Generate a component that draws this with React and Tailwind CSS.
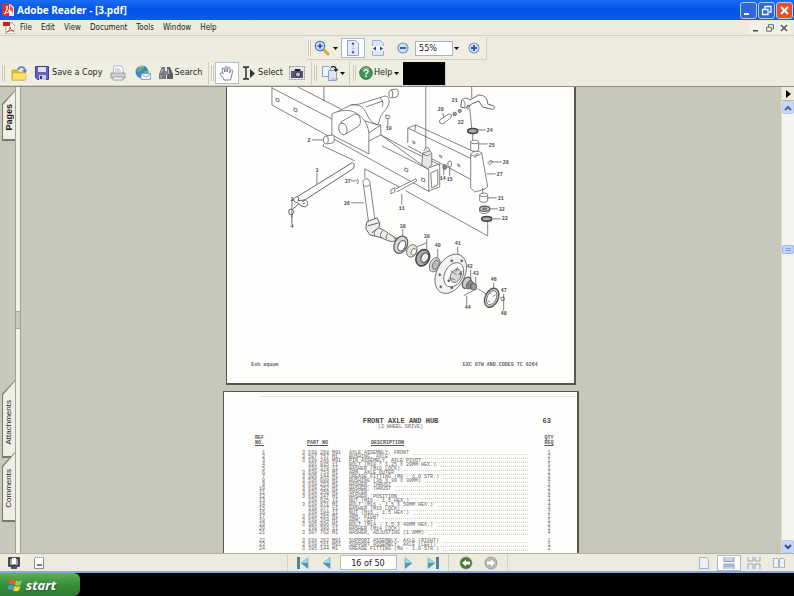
const UI_FONT = "font-['DejaVu_Sans_Condensed','DejaVu_Sans',sans-serif]";

const menus = ["File", "Edit", "View", "Document", "Tools", "Window", "Help"];

const parts = [
  ["1", "3 638 268 M91", "AXLE ASSEMBLY, FRONT", "1"],
  ["2", "3 587 757 M1", "BUSHING, AXLE", "2"],
  ["3", "3 638 246 M91", "PIN ASSEMBLY, AXLE PIVOT", "1"],
  ["4", "  391 835 11", "BOLT (M10 * 1.25 X 20MM HEX.)", "1"],
  ["5", "  338 378 11", "WASHER (M10 LOCK)", "1"],
  ["6", "3 638 753 M1", "ARM, AXLE OUTER", "2"],
  ["7", "3 385 144 M1", "GREASE FITTING (M8 - 1.0 STR.)", "2"],
  ["8", "3 536 080 M1", "BUSHING (36 X 30 X 30MM)", "4"],
  ["9", "3 638 253 M1", "WASHER, THRUST", "2"],
  ["10", "3 638 252 M1", "WASHER, THRUST", "2"],
  ["11", "3 638 250 M1", "SPACER", "2"],
  ["12", "3 638 247 M1", "WASHER, POSITION", "4"],
  ["13", "  338 625 11", "NUT (M16 - 1.5 HEX.)", "4"],
  ["14", "3 638 671 M1", "BOLT (M16 - 1.5 X 50MM HEX.)", "4"],
  ["15", "  338 377 11", "WASHER (M16 LOCK)", "4"],
  ["16", "  339 184 11", "NUT (M16 - 1.5 HEX.)", "2"],
  ["17", "3 638 265 M1", "ARM, RIGHT", "1"],
  ["18", "3 638 264 M1", "ARM, LEFT", "1"],
  ["19", "3 385 806 M1", "BOLT (M14 - 1.5 X 40MM HEX.)", "2"],
  ["20", "  338 380 11", "WASHER (M14 LOCK)", "2"],
  ["21", "3 387 762 M1", "WASHER, ADJUSTING (1.0MM)", "4"],
  ["", "", "", ""],
  ["22", "3 638 262 M91", "SUPPORT ASSEMBLY, AXLE (RIGHT)", "1"],
  ["23", "3 638 261 M91", "SUPPORT ASSEMBLY, AXLE (LEFT)", "1"],
  ["24", "3 385 144 M1", "GREASE FITTING (M8 - 1.0 STR.)", "2"],
];

// [number, x, y] of every callout in the exploded view
const callouts = [
  ["2", 309, 141], ["10", 389, 129], ["3", 317, 171], ["3", 292, 200], ["4", 292, 227],
  ["37", 348, 182], ["36", 347, 204], ["11", 402, 209], ["20", 441, 110], ["21", 455, 101],
  ["22", 461, 123], ["24", 490, 131], ["25", 492, 146], ["28", 506, 163], ["27", 500, 175],
  ["31", 501, 199], ["32", 502, 210], ["33", 505, 219], ["14", 443, 179], ["15", 450, 180],
  ["38", 403, 227], ["39", 427, 237], ["40", 438, 246], ["41", 458, 244], ["42", 470, 267],
  ["43", 476, 274], ["44", 468, 308], ["46", 494, 280], ["47", 504, 291], ["48", 504, 314],
];

function Caret({ className = "" }) {
  return (
    <svg viewBox="0 0 5 3" className={`h-[3px] w-[5px] shrink-0 ${className}`} aria-hidden="true">
      <path d="M0 0h5L2.500 3z" fill="#111" />
    </svg>
  );
}

function Grip({ className = "" }) {
  return <span className={`h-4 w-[3px] shrink-0 border-x border-x-[#cfc6b4] bg-[#faf8ee] ${className}`} />;
}

function AppLogo() {
  return (
    <svg viewBox="0 0 12 14" className="h-[14px] w-[12px]" aria-hidden="true">
      <path d="M0 1h8l4 3v9H0z" fill="#f7ded8" />
      <path d="M0 1h7v12H0z" fill="#d43325" />
      <path d="M2 11c2-2 3-5 3-8 0 4 2 6 5 6-3 0-5 0-8 2z" fill="none" stroke="#fff" />
      <path d="M8 2l3 3v5l-3-3z" fill="#e0604f" />
    </svg>
  );
}

function PdfIcon() {
  return (
    <svg viewBox="0 0 12 12" className="h-3 w-3" aria-hidden="true">
      <path d="M3 1h6l3 3v8H3z" fill="#fff" stroke="#777" strokeWidth=".7" />
      <path d="M0 0h7v4H0z" fill="#c8201a" />
      <path d="M4 10c2-1 3-3 3-5 0 2 2 4 4 4-3-1-5 0-7 1z" fill="none" stroke="#c8201a" strokeWidth=".8" />
    </svg>
  );
}

function ZoomIcon() {
  return (
    <svg viewBox="0 0 16 16" className="h-4 w-4" aria-hidden="true">
      <path d="M9 9l5 5" stroke="#e0a82e" strokeWidth="3" strokeLinecap="round" />
      <circle cx="6" cy="6" r="4.600" fill="#d5e6fa" stroke="#4a76bd" strokeWidth="1.300" />
      <path d="M6 3.500v5M3.500 6h5" stroke="#1d4fa8" strokeWidth="1.600" />
    </svg>
  );
}

function RoundSign({ plus }) {
  return (
    <svg viewBox="0 0 12 12" className="h-3 w-3" aria-hidden="true">
      <circle cx="6" cy="6" r="5" fill="#cfdff6" stroke="#7f98c6" strokeWidth="1.200" />
      <path d={plus ? "M6 3v6M3 6h6" : "M3 6h6"} stroke="#2b56a5" strokeWidth="1.800" />
    </svg>
  );
}

function FitPageIcon() {
  return (
    <svg viewBox="0 0 14 16" className="h-4 w-[14px]" aria-hidden="true">
      <path d="M1.500.5h8l3 3v12h-11z" fill="#e3edfb" stroke="#91a9cf" />
      <path d="M7 4v8" stroke="#7790ba" strokeDasharray="1 1" />
      <path d="M5.500 4.500L7 2l1.500 2.500zM5.500 11.500L7 14l1.500-2.500z" fill="#2c4164" />
    </svg>
  );
}

function FitWidthIcon() {
  return (
    <svg viewBox="0 0 14 16" className="h-4 w-[14px]" aria-hidden="true">
      <path d="M1.500.5h8l3 3v12h-11z" fill="#dbe7f9" stroke="#9bb1d6" />
      <path d="M1 6h12v5H1z" fill="#f4f8ff" />
      <path d="M5 6.500L2 8.500l3 2zM9 6.500l3 2-3 2z" fill="#2c4164" />
    </svg>
  );
}

function FolderIcon() {
  return (
    <svg viewBox="0 0 16 16" className="h-4 w-4" aria-hidden="true">
      <path d="M1 5h5l1 2h7v8H1z" fill="#e2b932" stroke="#c79a20" strokeWidth=".7" />
      <path d="M2 8h13v7H1z" fill="#fbe36f" stroke="#d2aa2e" strokeWidth=".6" />
      <path d="M7 5c1-4 6-4 7 0" fill="none" stroke="#6f8fc4" strokeWidth="2" />
      <path d="M11 5h5l-2 3z" fill="#4d7ac2" />
    </svg>
  );
}

function SaveIcon() {
  return (
    <svg viewBox="0 0 14 14" className="h-[14px] w-[14px]" aria-hidden="true">
      <path d="M.5.5h13v13h-11l-2-2z" fill="#6662bd" stroke="#423e91" />
      <path d="M3 1h8v5H3z" fill="#dfe2f8" />
      <path d="M4 9h7v5H4z" fill="#c8c9e4" />
      <path d="M5 10h2v3H5z" fill="#38347e" />
    </svg>
  );
}

function PrinterIcon() {
  return (
    <svg viewBox="0 0 16 16" className="h-4 w-4" aria-hidden="true">
      <path d="M4 1h7l2 2v6H3z" fill="#fff" stroke="#a3a7b0" strokeWidth=".8" />
      <path d="M5 4h5M5 6h6" stroke="#9bb4df" />
      <path d="M1 8h14v5H1z" fill="#cfd1d6" stroke="#8b8e96" strokeWidth=".8" />
      <path d="M3 12h10v3H3z" fill="#f8f8f8" stroke="#8b8e96" strokeWidth=".8" />
    </svg>
  );
}

function MailIcon() {
  return (
    <svg viewBox="0 0 16 16" className="h-4 w-4" aria-hidden="true">
      <circle cx="7" cy="7" r="6.500" fill="#3d84cf" />
      <path d="M3 3c3-2 5-2 6 0L7 6 4 7 1 6zM9 6l4-1v4H9z" fill="#63ad73" />
      <path d="M4 2c2-1 4-1 5-1" stroke="#c3e3fb" />
      <path d="M6 8.500h9.500v6H6z" fill="#f1f5fd" stroke="#7993c0" strokeWidth=".8" />
      <path d="M6 9l5 3 4.500-3" fill="none" stroke="#7993c0" strokeWidth=".8" />
    </svg>
  );
}

function BinocularsIcon() {
  return (
    <svg viewBox="0 0 14 14" className="h-[14px] w-[14px]" aria-hidden="true">
      <path d="M3 1h3v4l1 2v6H0V8z" fill="#74767d" />
      <path d="M8 1h3l3 7v5H8z" fill="#5c5e65" />
      <path d="M5 5h4v4H5z" fill="#82858d" />
      <path d="M2 7l2-4M9 3l1 5M2 9v3" stroke="#c1c4cc" />
    </svg>
  );
}

function HandIcon() {
  return (
    <svg viewBox="0 0 16 16" className="h-4 w-4" aria-hidden="true">
      <path
        d="M5 15c0-2-4-5-4-6.500C1.500 7 3 8 4 9L3 4c0-1.500 1.500-1.500 2 0l1 3V2.500c0-1.500 2-1.500 2 0V7l1-4c.5-1.500 2-1 2 .5L10.500 8 12 5.500c1-1.200 2-.5 1.700.8L12.500 11c0 2-1 2.500-1 4z"
        fill="#fff"
        stroke="#6d7088"
        strokeWidth=".9"
      />
    </svg>
  );
}

function SelectIcon() {
  return (
    <svg viewBox="0 0 14 16" className="h-4 w-[14px]" aria-hidden="true">
      <path d="M1 2h2l1 1 1-1h2M4 3v11M1 14h2l1-1 1 1h2" fill="none" stroke="#222" strokeWidth="1.400" />
      <path d="M8 4v9l5-4.500z" fill="#333" />
    </svg>
  );
}

function CameraIcon() {
  return (
    <svg viewBox="0 0 16 16" className="h-4 w-4" aria-hidden="true">
      <path d="M.5 1.500h15v13H.5z" fill="#e4e5ed" stroke="#9496a4" strokeDasharray="2 1" />
      <path d="M2 6h3l1-2h5l1 2h2v7H2z" fill="#55586a" />
      <path d="M6 4h5v2H6z" fill="#20222c" />
      <circle cx="9" cy="9.500" r="2.700" fill="#a9b8dc" stroke="#272a36" />
    </svg>
  );
}

function OrganizeIcon() {
  return (
    <svg viewBox="0 0 18 16" className="h-4 w-[18px]" aria-hidden="true">
      <path d="M1.500 1.500h6l2 2v8h-8z" fill="#eef4fd" stroke="#8ba3cb" />
      <path d="M7.500 5.500h6l2 2v8h-8z" fill="#dbe8f9" stroke="#8ba3cb" />
      <path d="M10 14h7" stroke="#d99b7a" />
      <path d="M10 2c3-1 5 0 5 2" fill="none" stroke="#222" strokeWidth="1.400" />
      <path d="M12.500 4h5L15 7z" fill="#222" />
    </svg>
  );
}

function HelpIcon() {
  return (
    <svg viewBox="0 0 14 14" className="h-[14px] w-[14px]" aria-hidden="true">
      <circle cx="7" cy="7" r="6.300" fill="#459555" stroke="#2d6f3c" />
      <path d="M3 4c1-2 5-3 7-1" stroke="#a3d3a8" fill="none" />
      <path d="M5 5.500c0-2.500 4-2.500 4 0 0 1.500-2 1.200-2 3M7 9.500v1.500" fill="none" stroke="#fff" strokeWidth="1.500" />
    </svg>
  );
}

function TitleBar() {
  const box = "flex h-[17px] w-[17px] items-center justify-center rounded-[3px] border border-[#b9cdf5]";
  return (
    <header className="flex h-5 shrink-0 items-center bg-linear-to-b from-[#1c6cf5] via-[#0054e6] to-[#0a5cf2] pr-px pl-[2px]">
      <AppLogo />
      <h1 className="ml-[3px] flex-1 font-['Open_Sans',sans-serif] text-[10px] leading-4 font-bold text-white">
        Adobe Reader - [3.pdf]
      </h1>
      <div className="flex gap-px">
        <button aria-label="Minimize" className={`${box} bg-[#2f65dd]`}>
          <svg viewBox="0 0 11 11" className="h-[11px] w-[11px]"><path d="M1 8h5v2H1z" fill="#fff" /></svg>
        </button>
        <button aria-label="Restore" className={`${box} bg-[#2f65dd]`}>
          <svg viewBox="0 0 11 11" className="h-[11px] w-[11px]">
            <path d="M4 4V1.500h6V7H8M1.500 4.500h5.500v5H1.500z" fill="none" stroke="#fff" strokeWidth="1.300" />
          </svg>
        </button>
        <button aria-label="Close" className={`${box} bg-[#e2532c]`}>
          <svg viewBox="0 0 11 11" className="h-[11px] w-[11px]"><path d="M2 2l7 7M9 2L2 9" stroke="#fff" strokeWidth="2" /></svg>
        </button>
      </div>
    </header>
  );
}

function MenuBar() {
  return (
    <nav className="flex h-4 shrink-0 items-center border-b border-[#d3d1c2] bg-[#ecebdd] pr-1 pl-[3px]">
      <PdfIcon />
      <div className="ml-[5px] flex flex-1 gap-[9px]">
        {menus.map((m) => (
          <button key={m} className="text-[8px] leading-3">{m}</button>
        ))}
      </div>
      <div className="flex items-center gap-[2px]">
        <button aria-label="Minimize document" className="flex h-3 w-3 items-center justify-center bg-[#f4f3ea]">
          <svg viewBox="0 0 8 8" className="h-2 w-2"><path d="M1 6h5v1.500H1z" fill="#444" /></svg>
        </button>
        <button aria-label="Restore document" className="flex h-3 w-3 items-center justify-center bg-[#f4f3ea]">
          <svg viewBox="0 0 8 8" className="h-2 w-2"><path d="M2.500 3V.7h5V5H6M.7 3.200h4.600v4H.7z" fill="none" stroke="#666" /></svg>
        </button>
        <button aria-label="Close document" className="flex h-3 w-3 items-center justify-center bg-[#f4f3ea]">
          <svg viewBox="0 0 8 8" className="h-2 w-2"><path d="M1 1l6 6M7 1L1 7" stroke="#555" strokeWidth="1.500" /></svg>
        </button>
      </div>
    </nav>
  );
}

function Toolbars() {
  const bar = "flex items-center border-r border-b border-[#d0cebf] bg-[#efeee2]";
  return (
    <div className="shrink-0 border-b border-[#8d8e80] bg-[#ecebdd]">
      <div className="flex h-[25px] justify-center pt-px">
        <div className={`${bar} h-[23px] w-[180px] pl-px`}>
          <Grip />
          <button aria-label="Zoom in tool" className="ml-[3px] flex items-center"><ZoomIcon /><Caret className="ml-[3px]" /></button>
          <button aria-label="Fit page" className="ml-[3px] flex h-5 w-6 items-center justify-center border border-[#a4b5d6] bg-white"><FitPageIcon /></button>
          <button aria-label="Fit width" className="ml-[6px]"><FitWidthIcon /></button>
          <button aria-label="Zoom out" className="ml-[12px]"><RoundSign /></button>
          <input aria-label="Zoom level" defaultValue="55%" className="ml-[6px] h-[15px] w-[38px] border border-[#a5b3c8] bg-white pl-[3px] text-[9px]" />
          <button aria-label="Zoom presets" className="ml-px"><Caret /></button>
          <button aria-label="Zoom in" className="ml-[9px]"><RoundSign plus /></button>
        </div>
      </div>
      <div className="flex h-[25px] items-center text-[9px]">
        <div className={`${bar} h-6 w-[209px]`}>
          <Grip className="ml-[2px]" />
          <button aria-label="Open" className="ml-[6px]"><FolderIcon /></button>
          <button className="ml-[8px] flex items-center gap-[3px] whitespace-nowrap"><SaveIcon />Save a Copy</button>
          <button aria-label="Print" className="ml-[7px]"><PrinterIcon /></button>
          <button aria-label="Email" className="ml-[9px]"><MailIcon /></button>
          <button className="ml-[8px] flex items-center gap-[2px]"><BinocularsIcon />Search</button>
        </div>
        <div className={`${bar} h-6 w-[103px]`}>
          <Grip className="ml-[2px]" />
          <button aria-label="Hand tool" className="ml-px flex h-[22px] w-6 items-center justify-center border border-[#b4bed2] bg-white"><HandIcon /></button>
          <button className="ml-[3px] flex items-center gap-[2px]"><SelectIcon />Select</button>
          <button aria-label="Snapshot" className="ml-[6px]"><CameraIcon /></button>
        </div>
        <div className={`${bar} h-6 w-[38px]`}>
          <Grip className="ml-[2px]" />
          <button aria-label="Organize" className="ml-[4px] flex items-center"><OrganizeIcon /><Caret className="ml-px" /></button>
        </div>
        <div className={`${bar} h-6`}>
          <Grip className="ml-[3px]" />
          <button className="ml-[3px] flex items-center gap-px"><HelpIcon />Help<Caret className="ml-px" /></button>
          <div className="ml-[4px] h-[23px] w-[42px] bg-black" />
        </div>
      </div>
    </div>
  );
}

function SideTab({ label, className, textClass }) {
  return (
    <button className={`ml-[2px] w-[13px] shrink-0 bg-[#77796c] pt-px pb-[2px] pl-px [clip-path:polygon(100%_0,0_14px,0_100%,100%_100%)] ${className}`}>
      <span className={`flex h-full w-full items-end justify-center bg-[#eeeee4] [clip-path:polygon(100%_0,0_14px,0_100%,100%_100%)] ${textClass}`}>
        <span className="rotate-180 leading-3 [writing-mode:vertical-rl]">{label}</span>
      </span>
    </button>
  );
}

function Sidebar() {
  return (
    <aside className="flex shrink-0 bg-[#c7c8ba] font-['Liberation_Sans',Arial,sans-serif]">
      <div className="flex w-[15px] flex-col pt-[3px] pb-[31px]">
        <SideTab label="Pages" className="h-[51px]" textClass="pb-[8px] text-[9px] font-bold" />
        <div className="flex-1" />
        <SideTab label="Attachments" className="h-[78px]" textClass="pb-[12px] text-[8px]" />
        <SideTab label="Comments" className="-mt-[6px] h-[70px]" textClass="pb-[12px] text-[8px]" />
      </div>
      <div className="flex w-[6px] items-center border-x border-x-[#a3a496] bg-[#f1f1e6]">
        <div className="h-[18px] w-full border-y border-[#a3a496] bg-[#c9c9bb]" />
      </div>
    </aside>
  );
}

function AxleDrawing() {
  return (
    <svg viewBox="0 0 347 270" className="block aspect-[347/270] w-full" role="img" aria-label="Front axle exploded view">
      <g transform="translate(-227 -87)" fill="none" stroke="#636363" strokeWidth=".8" strokeLinejoin="round">
        {/* main beam */}
        <path d="M272 87v18l158 87M272 88l60 31M298 87l43 22M324 87v14M381 135l48 35v21l11-4v-23l-11 4M381 135l24 13 35 17M382 146l46 23M431 173l7-3v15l-6 3z" />
        <path d="M276 98l3 1v3l-3-1zM294 108l3 1v3l-3-1zM405 168l3 1v3l-3-1zM422 178l3 1v3l-3-1z" />
        {/* pivot bracket */}
        <path d="M337 112l14-7 9-1 22-7c6-3 8 2 7 7-1 4-5 7-8 12l-3 9z" fill="#fff" />
        <path d="M366 107l17-6M380 98c3 2 4 6 2 9" />
        <path d="M351 105c10-1 13 3 16 9 3 7 7 11 14 11v10l-12 6M369 133l12-8" />
        <path d="M332 135v-21c8-4 18-5 24-1 7 4 12 10 13 20v21z" fill="#fff" />
        <path d="M341 122l14-8c6 0 7 9 4 12l-13 8z" fill="#fff" />
        <ellipse cx="343" cy="129" rx="4" ry="6" transform="rotate(-15 343 129)" fill="#fff" />
        <path d="M327 136l6-1c2 1 2 7 0 8l-6 1" fill="#fff" />
        <ellipse cx="326" cy="140" rx="2.500" ry="4" fill="#fff" />
        <ellipse cx="391" cy="94" rx="2" ry="4" /><path d="M391 90l6-1c2 1 2 7 0 8l-5 1" />
        <path d="M386 115l4 1-1 3-3-1zM388 119v8M312 140h12M317 173v11M324 144l-1 2 32 15M292 199v19" />
        {/* pivot pin */}
        <path d="M297 197l55-34c3-1 3 4 1 6l-51 33M295 198c2-3 5 0 3 3l7-1c4 1 3 7 0 7-4 0-6-4-10-5-2-1-2-3 0-4M303 204l2-1M289 210l3-1 2 3-2 3-3-1zM293 209l6-5M292 215v9" strokeWidth="1" />
        {/* spindle */}
        <path d="M363 181l2-2h3l2 3 5 37M363 181l6 43M363 185c2 2 5 2 7 0M351 181h6M357 179c2 0 2 5 0 5M351 203h13M365 178v-9l38 20" />
        <path d="M367 222l10-4 3 5-1 5 6 3 12 8c-3 5-9 2-15-1l-12-3-4-6zM368 226l11-3M372 233l7-5M383 231c-3 3-3 5-1 7M388 234c-2 2-2 4-1 5M377 229c-3 3-3 5-2 7" fill="#ededed" strokeWidth="1" />
        {/* right hand sleeve and upright */}
        <path d="M408 143v-15l8-3 63 29M408 128l64 31v21l-64-34M416 125l-1 6M426 87v63M472 87v11" />
        <path d="M413 141l2 1v2l-2-1zM440 155l2 1v2l-2-1zM458 164l2 1v2l-2-1z" />
        <path d="M423 153l7-2 2 2v12l-4 4-6-4zM423 154c3 2 6 2 8 0M424 151c2-5 6-4 6 0" fill="#e6e6e6" />
        <path d="M471 154c2-3 7-4 11-1l6 34c-3 3-9 4-13 5l-4-4zM471 155c4 2 8 1 11-2M475 158l3-5" fill="#fff" />
        <path d="M487 174h9M479 144h9M477 130h9M490 162h12M487 198h10M490 209h8M493 219h8M473 134v6M483 188v6M488 221v15L406 191M470 109l2 19" />
        {/* steering arm */}
        <path d="M462 100c2-3 6-2 8 0l9-5c6 0 9 4 9 9l6 2c2 2 0 4-3 3l-8-2-4-6-7 3-6 4-5-1z" fill="#fff" strokeWidth="1" />
        <path d="M463 100c2 1 3 4 2 7M468 105l2 1-1 3-2-1zM443 113l1 4M440 120l9-6 3 1-1 3-8 6-3-1z" />
        <circle cx="455" cy="114" r="1.800" fill="#999" /><circle cx="460" cy="111" r="1.600" fill="#999" />
        {/* rings and bushings along the king pin */}
        <ellipse cx="473" cy="131" rx="5" ry="2.500" fill="#a8a8a8" stroke="#444" strokeWidth="1.600" />
        <path d="M471 142v8c2 2 6 2 8 0v-8M480 195v6c2 2 6 2 8 0v-6M391 190l4-2v4l-4 2zM396 189l20-10 1 2-20 11" fill="#fff" />
        <ellipse cx="475" cy="142" rx="4" ry="1.800" fill="#fff" /><ellipse cx="484" cy="195" rx="4" ry="1.800" fill="#fff" />
        <path d="M480 209v3c2 3 8 2 10-1v-3" />
        <ellipse cx="485" cy="209" rx="5" ry="2.600" fill="#ddd" strokeWidth="1.300" /><ellipse cx="485" cy="209" rx="2.500" ry="1" fill="#888" />
        <ellipse cx="487" cy="219" rx="5" ry="2.400" fill="#aaa" stroke="#444" strokeWidth="1.600" />
        <path d="M488 163l3-3 2 2-3 3zM402 194v11M444 167v8M450 167v9" />
        <ellipse cx="445" cy="167" rx="2" ry="2.500" fill="#888" /><ellipse cx="450" cy="164" rx="2" ry="3" />
        {/* bearings */}
        <path d="M394 239l7-2M403 229v8M427 239v4l-10 4M427 243v9M438 249v11M458 247v10" />
        <ellipse cx="401" cy="245" rx="6.500" ry="9" transform="rotate(25 401 245)" fill="#d8d8d8" strokeWidth="1.300" />
        <ellipse cx="402" cy="246" rx="3.500" ry="5.500" transform="rotate(25 402 246)" fill="#fff" strokeWidth="1.200" />
        <ellipse cx="412" cy="251" rx="5" ry="6.500" transform="rotate(25 412 251)" fill="#e5e5d5" />
        <ellipse cx="414" cy="252" rx="2.500" ry="3.500" transform="rotate(25 414 252)" fill="#fff" />
        <ellipse cx="423" cy="258" rx="6.500" ry="8.500" transform="rotate(25 423 258)" fill="#aaa" stroke="#444" strokeWidth="1.500" />
        <ellipse cx="425" cy="258" rx="3.500" ry="5" transform="rotate(25 425 258)" fill="#eee" stroke="#555" strokeWidth="1.200" />
        <ellipse cx="435" cy="265" rx="5" ry="7.500" transform="rotate(25 435 265)" fill="#ddd" />
        <ellipse cx="436" cy="265" rx="3" ry="5" transform="rotate(25 436 265)" fill="#bbb" />
        {/* hub */}
        <ellipse cx="451" cy="274" rx="14" ry="21" transform="rotate(28 451 274)" fill="#f2f2f2" />
        <ellipse cx="454" cy="275" rx="9" ry="13" transform="rotate(28 454 275)" fill="#fff" />
        <ellipse cx="456" cy="276" rx="5" ry="7" transform="rotate(28 456 276)" fill="#d8d8d8" />
        <path d="M451 271l6 4M449 278l6 2M458 267l-2 5M463 271l-4 4" />
        {[[452, 261], [462, 261], [440, 275], [441, 287], [452, 288], [461, 274], [449, 281]].map(([cx, cy]) => (
          <circle key={`${cx}-${cy}`} cx={cx} cy={cy} r="1" fill="#555" />
        ))}
        <ellipse cx="467" cy="283" rx="4" ry="6" transform="rotate(25 467 283)" fill="#ccc" strokeWidth="1.300" />
        <ellipse cx="470" cy="285" rx="3" ry="4.500" transform="rotate(25 470 285)" fill="#888" />
        <ellipse cx="474" cy="287" rx="3" ry="3.500" fill="#999" stroke="#444" />
        <path d="M464 296l9-5M467 296v9M471 270v11M476 277v7M478 289l10 6M494 283v7M504 294v17" />
        {/* dust cap */}
        <ellipse cx="492" cy="298" rx="6.500" ry="10" transform="rotate(25 492 298)" fill="#d4d4ca" stroke="#555" strokeWidth="1.400" />
        <ellipse cx="492" cy="298" rx="4.500" ry="7.500" transform="rotate(25 492 298)" fill="#fff" />
        <path d="M489 291l2 3M496 295l-3 2M488 301l2 1M501 298l3-1 1 3-3 1z" />
        <g fill="#444" stroke="none" textAnchor="middle" className="font-['Liberation_Mono',monospace] text-[5px] font-bold">
          {callouts.map(([n, x, y]) => (
            <text key={`${n}-${x}-${y}`} x={x} y={y + 1}>{n}</text>
          ))}
        </g>
      </g>
    </svg>
  );
}

function DiagramPage() {
  return (
    <section className="w-[46%] shrink-0 border-r-2 border-b-2 border-l border-[#55574a] bg-[#fefefc]">
      <AxleDrawing />
      <div className="flex justify-between pt-[6px] pr-[36px] pb-[16px] pl-[24px] font-['Liberation_Mono',monospace] text-[5px] leading-[4px] font-bold text-[#666]">
        <span>Eoh aquum</span>
        <span>EXC 07W AND.CODES TC 6264</span>
      </div>
    </section>
  );
}

function PartsPage() {
  return (
    <section className="mt-[6px] w-[356px] shrink-0 border-t border-r-2 border-l border-[#55574a] bg-[#fdfdfb] font-['Liberation_Mono',monospace] text-[5px] text-[#666]">
      <div className="mt-1 ml-9 border-t border-[#e3e3df]" />
      <div className="mt-[21px] grid grid-cols-[1fr_auto_1fr] items-center pr-[26px] pl-[26px] text-[7px] leading-[7px] font-bold text-[#444]">
        <h2 className="col-start-2">FRONT AXLE AND HUB</h2>
        <span className="text-right">63</span>
      </div>
      <p className="text-center leading-[5px]">(2 WHEEL DRIVE)</p>
      <table className="mt-[6px] ml-[31px] w-[301px] table-fixed text-left leading-[4px]">
        <thead>
          <tr className="align-bottom leading-[5px] text-[#555]">
            <th className="w-[47px] pb-[5px] font-bold">REF<br /><u>NO.</u></th>
            <th className="w-[47px] pb-[5px] pl-[5px] font-bold"><u>PART NO</u></th>
            <th className="pb-[5px] pl-[22px] font-bold"><u>DESCRIPTION</u></th>
            <th className="w-[14px] pb-[5px] text-center font-bold">QTY<br /><u>REQ</u></th>
          </tr>
        </thead>
        <tbody>
          {parts.map(([ref, no, text, qty], i) => (
            <tr key={i} className="h-1">
              <td><div className="w-[10px] text-right">{ref}</div></td>
              <td className="whitespace-pre">{no}</td>
              <td>
                <div className="flex gap-1 whitespace-nowrap">
                  {text}
                  {text && <span className="mt-[3px] mr-[14px] h-0 flex-1 border-t border-dotted border-[#d2d2cd]" />}
                </div>
              </td>
              <td className="text-center">{qty}</td>
            </tr>
          ))}
        </tbody>
      </table>
      <div className="h-8" />
    </section>
  );
}

function ScrollBar() {
  const btn = "flex h-[13px] w-full shrink-0 items-center justify-center rounded-[2px] border border-[#b9c9f0] bg-[#c8d6fb]";
  return (
    <div className="flex w-[13px] shrink-0 flex-col border-l border-[#dddccf] bg-[#f5f4ee]">
      <button aria-label="Show panel" className="flex h-[14px] shrink-0 items-center justify-center border-b border-[#b8b7a8] bg-[#ecebdd]">
        <svg viewBox="0 0 5 8" className="h-2 w-[5px]"><path d="M0 0l5 4-5 4z" fill="#000" /></svg>
      </button>
      <button aria-label="Scroll up" className={btn}>
        <svg viewBox="0 0 8 6" className="h-[6px] w-2"><path d="M1 5l3-3 3 3" fill="none" stroke="#4d6185" strokeWidth="2" /></svg>
      </button>
      <div className="flex flex-1 flex-col">
        <div className="grow-[131]" />
        <div className="flex h-[9px] flex-col items-center justify-center gap-px rounded-[2px] border border-[#9fb6ee] bg-[#c2d3fc]">
          <span className="h-px w-[5px] bg-[#829cdb]" />
          <span className="h-px w-[5px] bg-[#829cdb]" />
        </div>
        <div className="grow-[286]" />
      </div>
      <button aria-label="Scroll down" className={btn}>
        <svg viewBox="0 0 8 6" className="h-[6px] w-2"><path d="M1 1l3 3 3-3" fill="none" stroke="#354f85" strokeWidth="2" /></svg>
      </button>
    </div>
  );
}

function PageArrow({ back, end }) {
  return (
    <svg viewBox="0 0 14 14" className={`h-[14px] w-[14px] ${back ? "-scale-x-100" : ""}`} aria-hidden="true">
      <path d="M2 1.500L9 7l-7 5.500z" fill="#a5d7ec" stroke="#86aec6" strokeWidth=".8" />
      <path d="M2 7h7l-7 5.500z" fill="#4d93ba" />
      {end && <path d="M10 1h3v12h-3z" fill="#527f9c" />}
    </svg>
  );
}

function HistoryIcon({ color, back }) {
  return (
    <svg viewBox="0 0 14 14" className={`h-[14px] w-[14px] ${back ? "" : "-scale-x-100"}`} aria-hidden="true">
      <circle cx="7" cy="7" r="6" fill={color} stroke="#8b9181" strokeWidth=".7" />
      <path d="M3 7l4-3.500v2h4v3H7v2z" fill="#fff" />
    </svg>
  );
}

function LayoutIcon({ kind }) {
  return (
    <svg viewBox="0 0 14 14" className="h-[14px] w-[14px]" aria-hidden="true">
      {kind === "single" && <path d="M2.500 1.500h7l2 2v9h-9z" fill="#eef1f9" stroke="#aab1c6" />}
      {kind === "continuous" && <path d="M2 1v4.500h10V1M2 13V8h10v5M3 10h8" fill="#c9d4ec" stroke="#8b9abb" />}
      {kind === "facing-continuous" && <path d="M1 1v4h5V1M8 1v4h5V1M1 13V8h5v5M8 13V8h5v5" fill="#e9edf7" stroke="#9aa2b9" />}
      {kind === "facing" && <path d="M1.500 2.500h4l1 1v8h-5zM7.500 2.500h4l1 1v8h-5z" fill="#eef1f9" stroke="#aab1c6" />}
    </svg>
  );
}

function StatusBar() {
  return (
    <footer className="grid h-5 shrink-0 grid-cols-[1fr_auto_1fr] items-center border-t border-t-[#b1b1a2] border-b-2 border-b-[#87acd4] bg-[#ecebdd]">
      <div className="flex items-center gap-[13px] pl-[8px]">
        <button aria-label="Full screen">
          <svg viewBox="0 0 12 12" className="h-3 w-3">
            <path d="M1 1h10v8H1z" fill="#9a9fa8" stroke="#222" strokeWidth="1.500" />
            <path d="M4 1h4v6H4z" fill="#fff" /><path d="M3 11h6" stroke="#222" strokeWidth="1.500" />
          </svg>
        </button>
        <button aria-label="Hide toolbars">
          <svg viewBox="0 0 12 12" className="h-3 w-3">
            <path d="M1.500.5h9v11h-9z" fill="#fff" stroke="#8b8ca5" />
            <path d="M1 1h10" stroke="#fff" strokeDasharray="1 1" /><path d="M4 8h5" stroke="#4b4c80" strokeWidth="1.500" />
          </svg>
        </button>
      </div>
      <div className="flex h-full items-center border-x border-x-[#d3d1c2]">
        <button aria-label="First page" className="ml-[8px]"><PageArrow back end /></button>
        <button aria-label="Previous page" className="ml-[8px]"><PageArrow back /></button>
        <input aria-label="Page number" defaultValue="16 of 50" className="ml-[8px] h-[15px] w-[57px] border border-[#b3bccb] bg-white text-center text-[9px]" />
        <button aria-label="Next page" className="ml-[6px]"><PageArrow /></button>
        <button aria-label="Last page" className="ml-[9px]"><PageArrow end /></button>
        <span className="ml-[8px] h-full w-px bg-[#cfcdbd]" />
        <button aria-label="Previous view" className="ml-[10px]"><HistoryIcon color="#4d7a31" back /></button>
        <button aria-label="Next view" className="mr-[9px] ml-[11px]"><HistoryIcon color="#b7b7b0" /></button>
      </div>
      <div className="flex h-full items-center justify-end pr-[8px]">
        <button aria-label="Single page"><LayoutIcon kind="single" /></button>
        <button aria-label="Continuous" className="mx-[6px] flex h-4 w-6 items-center justify-center border border-[#aeb9cc] bg-white"><LayoutIcon kind="continuous" /></button>
        <button aria-label="Continuous facing"><LayoutIcon kind="facing-continuous" /></button>
        <button aria-label="Facing" className="ml-[11px]"><LayoutIcon kind="facing" /></button>
      </div>
    </footer>
  );
}

function TaskBar() {
  return (
    <div className="flex h-[23px] shrink-0 bg-black">
      <button className="flex w-20 items-center gap-[3px] rounded-r-md bg-linear-to-b from-[#5fae5a] via-[#37903a] to-[#2f7c32] pl-[7px]">
        <svg viewBox="0 0 16 14" className="h-[14px] w-4" aria-hidden="true">
          <path d="M3 2c2-1 3-1 5 0L7 6.500c-2-1-3-1-5 0z" fill="#ee5a30" />
          <path d="M9 2.500c2 1 3 1 6 0l-1.500 4.500c-2 1-4 1-6 0z" fill="#8ace4f" />
          <path d="M1.700 7.500c2-1 3-1 5 0L5.500 12c-2-1-3-1-5 0z" fill="#5b93ee" />
          <path d="M7.500 8c2 1 4 1 6 0L12 12.500c-2 1-4 1-6 0z" fill="#f8d13c" />
        </svg>
        <span className="font-['Open_Sans',sans-serif] text-[13px] leading-4 font-bold text-white italic [text-shadow:1px_1px_1px_#2a5a2a]">start</span>
      </button>
    </div>
  );
}

export default function App() {
  return (
    <div className={`flex h-screen flex-col overflow-hidden bg-[#ecebdd] text-[#1c1c1c] ${UI_FONT}`}>
      <TitleBar />
      <MenuBar />
      <Toolbars />
      <div className="flex min-h-0 flex-1">
        <Sidebar />
        <main className="flex min-w-0 flex-1 flex-col items-center overflow-hidden bg-[#c7c8ba]">
          <DiagramPage />
          <PartsPage />
        </main>
        <ScrollBar />
      </div>
      <StatusBar />
      <TaskBar />
    </div>
  );
}
